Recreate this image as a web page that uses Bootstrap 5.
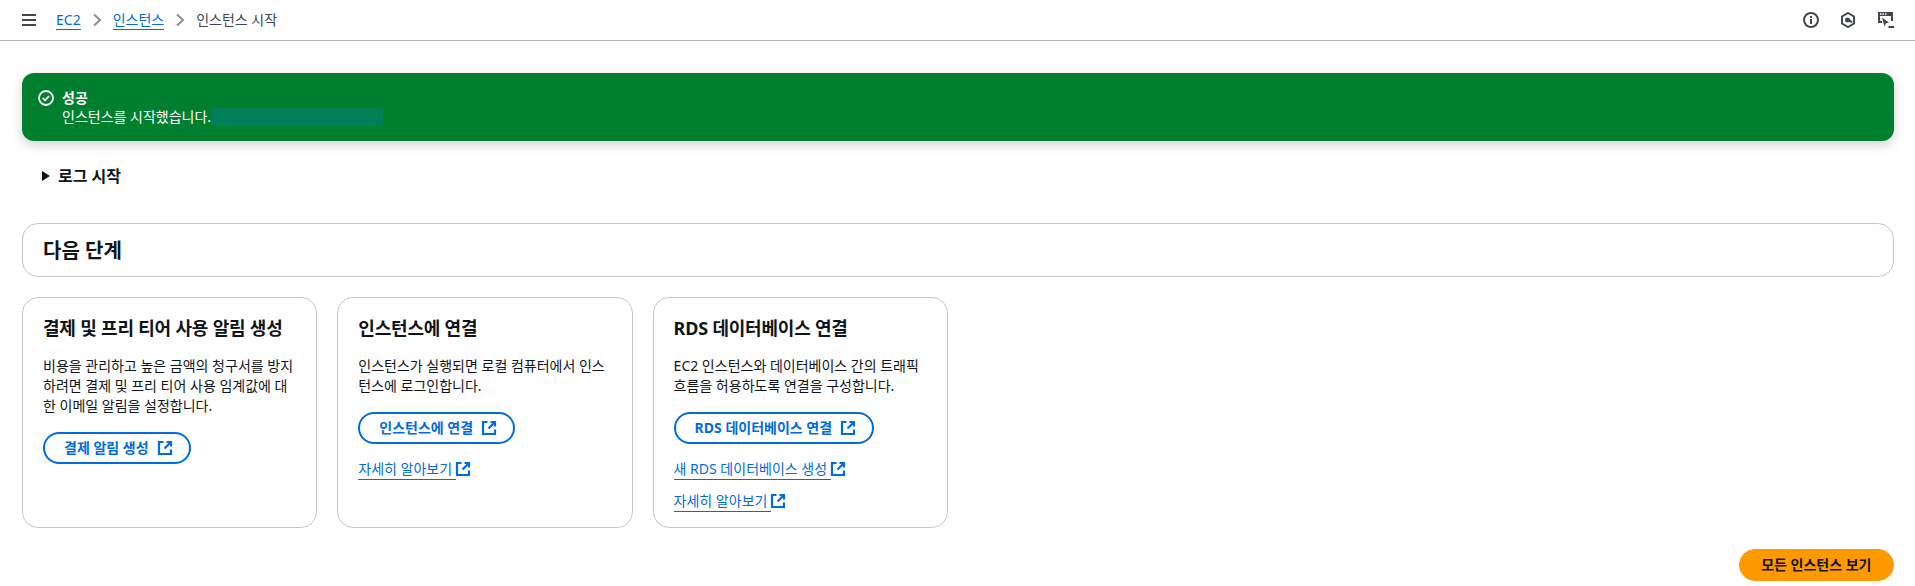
<!DOCTYPE html>
<html lang="ko">

<head>
    <meta charset="UTF-8">
    <title>인스턴스 시작</title>
    <link href="https://cdn.jsdelivr.net/npm/bootstrap@5.3.2/dist/css/bootstrap.min.css" rel="stylesheet">
    <style>
        body {
            background-color: #fff;
            color: #0f141a;
            font-family: "Noto Sans", "Noto Sans CJK KR", sans-serif;
            font-size: 14px;
            line-height: 20px;
        }

        a {
            color: #006ce0;
        }

        .top-bar {
            height: 41px;
            padding: 0 21px;
            border-bottom: 1px solid #b4b4bb;
        }

        .crumb-link {
            text-decoration: none;
            border-bottom: 1px solid #006ce0;
            line-height: 18px;
        }

        .crumb-sep {
            margin: 0 11px;
            color: #8c8c94;
        }

        .crumb-now {
            color: #424650;
        }

        .menu-btn {
            margin-right: 19px;
        }

        .top-icons {
            gap: 21px;
            margin-right: -1px;
        }

        .page-body {
            padding: 32px 21px 0 22px;
        }

        .flash-ok {
            background-color: #00802f;
            color: #fff;
            height: 68px;
            border-radius: 12px;
            padding: 15px 20px;
            box-shadow: 0 4px 12px rgba(0, 7, 22, .18);
        }

        .flash-icon {
            margin: 2px 8px 0 -4px;
            flex: none;
        }

        .flash-title {
            font-weight: 700;
        }

        .flash-line {
            margin-top: -1px;
        }

        .redact {
            display: inline-block;
            width: 172px;
            height: 18px;
            vertical-align: -4px;
            background-color: #007f58;
            border-radius: 3px;
        }

        .log-toggle {
            margin: 23px 0 0 19px;
            font-size: 16px;
            font-weight: 700;
            line-height: 22px;
            height: 23px;
        }

        .log-toggle svg {
            margin-right: 7px;
        }

        .steps-head {
            margin-top: 36px;
            height: 54px;
            border: 1px solid #c6c6cd;
            border-radius: 16px;
            padding: 0 20px;
            font-size: 20px;
            font-weight: 700;
            line-height: 53px;
        }

        .step-grid {
            margin-top: 20px;
            gap: 20px;
        }

        .step-box {
            width: 295.3px;
            height: 231px;
            border: 1px solid #c6c6cd;
            border-radius: 16px;
            padding: 19px 20px 20px;
        }

        .step-title {
            font-size: 18px;
            font-weight: 700;
            line-height: 22px;
            letter-spacing: -.2px;
            margin: 0 0 17px;
        }

        .step-text {
            margin: 0 0 16px;
        }

        .btn-outline-aws {
            --bs-btn-color: #006ce0;
            --bs-btn-border-color: #006ce0;
            --bs-btn-hover-color: #006ce0;
            --bs-btn-hover-bg: #f0fbff;
            --bs-btn-hover-border-color: #006ce0;
            --bs-btn-border-width: 2px;
            --bs-btn-border-radius: 20px;
            --bs-btn-font-size: 14px;
            --bs-btn-font-weight: 700;
            --bs-btn-line-height: 20px;
            --bs-btn-padding-x: 19px;
            --bs-btn-padding-y: 4px;
        }

        .btn-outline-aws svg {
            margin: 0 -3px 0 8px;
            vertical-align: -3px;
        }

        .more-link {
            display: block;
            margin-top: 12px;
            height: 20px;
            line-height: 20px;
        }

        .step-box > .btn + .more-link {
            margin-top: 15px;
        }

        .more-link span {
            border-bottom: 1px solid #006ce0;
            padding-bottom: 1px;
            text-decoration: none;
        }

        .more-link a {
            text-decoration: none;
        }

        .more-link svg {
            vertical-align: -3px;
            margin-left: -1px;
        }

        .step-actions {
            margin-top: 21px;
        }

        .btn-orange {
            --bs-btn-color: #0f141a;
            --bs-btn-bg: #ff9900;
            --bs-btn-border-color: #ff9900;
            --bs-btn-hover-color: #0f141a;
            --bs-btn-hover-bg: #fa6f00;
            --bs-btn-hover-border-color: #fa6f00;
            --bs-btn-border-radius: 20px;
            --bs-btn-font-size: 14px;
            --bs-btn-font-weight: 700;
            --bs-btn-line-height: 20px;
            --bs-btn-padding-x: 21.500px;
            --bs-btn-padding-y: 5px;
        }
    </style>
</head>

<body>
    <svg width="0" height="0" class="position-absolute">
        <symbol id="ext" viewBox="0 0 16 16">
            <path d="M6.500 2H2v12h12V9.500" fill="none" stroke="currentColor" stroke-width="2.200"/>
            <path d="M9.500 2H14v4.500M14 2L7.500 8.500" fill="none" stroke="currentColor" stroke-width="2.200"/>
        </symbol>
    </svg>

    <header class="top-bar d-flex align-items-center justify-content-between">
        <nav class="d-flex align-items-center">
            <svg class="menu-btn" width="16" height="14" viewBox="0 0 16 14">
                <path d="M1 2h14M1 7h14M1 12h14" stroke="#424650" stroke-width="2"/>
            </svg>
            <a href="#" class="crumb-link">EC2</a>
            <svg class="crumb-sep" width="10" height="14" viewBox="0 0 10 14">
                <path d="M2 1.500L8 7l-6 5.500" fill="none" stroke="currentColor" stroke-width="2"/>
            </svg>
            <a href="#" class="crumb-link">인스턴스</a>
            <svg class="crumb-sep" width="10" height="14" viewBox="0 0 10 14">
                <path d="M2 1.500L8 7l-6 5.500" fill="none" stroke="currentColor" stroke-width="2"/>
            </svg>
            <span class="crumb-now">인스턴스 시작</span>
        </nav>
        <div class="top-icons d-flex align-items-center">
            <svg width="16" height="16" viewBox="0 0 16 16">
                <circle cx="8" cy="8" r="7" fill="none" stroke="#424650" stroke-width="2"/>
                <path d="M8 7v5M8 4v2" stroke="#424650" stroke-width="2"/>
            </svg>
            <svg width="16" height="16" viewBox="0 0 16 16">
                <path d="M8 1l6 3.500v7L8 15l-6-3.500v-7z" fill="none" stroke="#424650" stroke-width="2"/>
                <circle cx="7.500" cy="8" r="2.500" fill="#424650"/>
                <path d="M9 8l3 2.500" stroke="#424650" stroke-width="2"/>
            </svg>
            <svg width="18" height="18" viewBox="0 0 18 18">
                <path d="M1 1h15v4H1z" fill="#424650"/>
                <path d="M5 11H2V2M15 2v8" fill="none" stroke="#424650" stroke-width="2"/>
                <path d="M3 3h1.500M5.500 3H7M8 3h1.500" stroke="#fff" stroke-width="1.400"/>
                <path d="M5 6.500l7 5-3 .8-1.500 3.200z" fill="#424650"/>
                <path d="M11.500 16h5.500" stroke="#424650" stroke-width="2"/>
            </svg>
        </div>
    </header>

    <main class="page-body">
        <div class="flash-ok d-flex">
            <svg class="flash-icon" width="16" height="16" viewBox="0 0 16 16">
                <circle cx="8" cy="8" r="7" fill="none" stroke="#fff" stroke-width="1.800"/>
                <path d="M4.800 8l2.300 2.300 4-4.300" fill="none" stroke="#fff" stroke-width="1.800"/>
            </svg>
            <div>
                <div class="flash-title">성공</div>
                <div class="flash-line">인스턴스를 시작했습니다.<span class="redact"></span></div>
            </div>
        </div>

        <div class="log-toggle d-flex align-items-center">
            <svg width="10" height="12" viewBox="0 0 10 12">
                <path d="M1 1l8 5-8 5z" fill="#0f141a"/>
            </svg>
            로그 시작
        </div>

        <div class="steps-head">다음 단계</div>

        <div class="step-grid d-flex">
            <section class="step-box">
                <h3 class="step-title">결제 및 프리 티어 사용 알림 생성</h3>
                <p class="step-text">비용을 관리하고 높은 금액의 청구서를 방지하려면 결제 및 프리 티어 사용 임계값에 대한 이메일 알림을 설정합니다.</p>
                <a href="#" class="btn btn-outline-aws">결제 알림 생성<svg width="16" height="16"><use href="#ext"/></svg></a>
            </section>
            <section class="step-box">
                <h3 class="step-title">인스턴스에 연결</h3>
                <p class="step-text">인스턴스가 실행되면 로컬 컴퓨터에서 인스턴스에 로그인합니다.</p>
                <a href="#" class="btn btn-outline-aws">인스턴스에 연결<svg width="16" height="16"><use href="#ext"/></svg></a>
                <div class="more-link"><a href="#"><span>자세히 알아보기 </span><svg width="16" height="16"><use href="#ext"/></svg></a></div>
            </section>
            <section class="step-box">
                <h3 class="step-title">RDS 데이터베이스 연결</h3>
                <p class="step-text">EC2 인스턴스와 데이터베이스 간의 트래픽 흐름을 허용하도록 연결을 구성합니다.</p>
                <a href="#" class="btn btn-outline-aws">RDS 데이터베이스 연결<svg width="16" height="16"><use href="#ext"/></svg></a>
                <div class="more-link"><a href="#"><span>새 RDS 데이터베이스 생성 </span><svg width="16" height="16"><use href="#ext"/></svg></a></div>
                <div class="more-link"><a href="#"><span>자세히 알아보기 </span><svg width="16" height="16"><use href="#ext"/></svg></a></div>
            </section>
        </div>

        <div class="step-actions d-flex justify-content-end">
            <a href="#" class="btn btn-orange">모든 인스턴스 보기</a>
        </div>
    </main>

    <script src="https://cdn.jsdelivr.net/npm/bootstrap@5.3.2/dist/js/bootstrap.bundle.min.js"></script>
</body>

</html>
